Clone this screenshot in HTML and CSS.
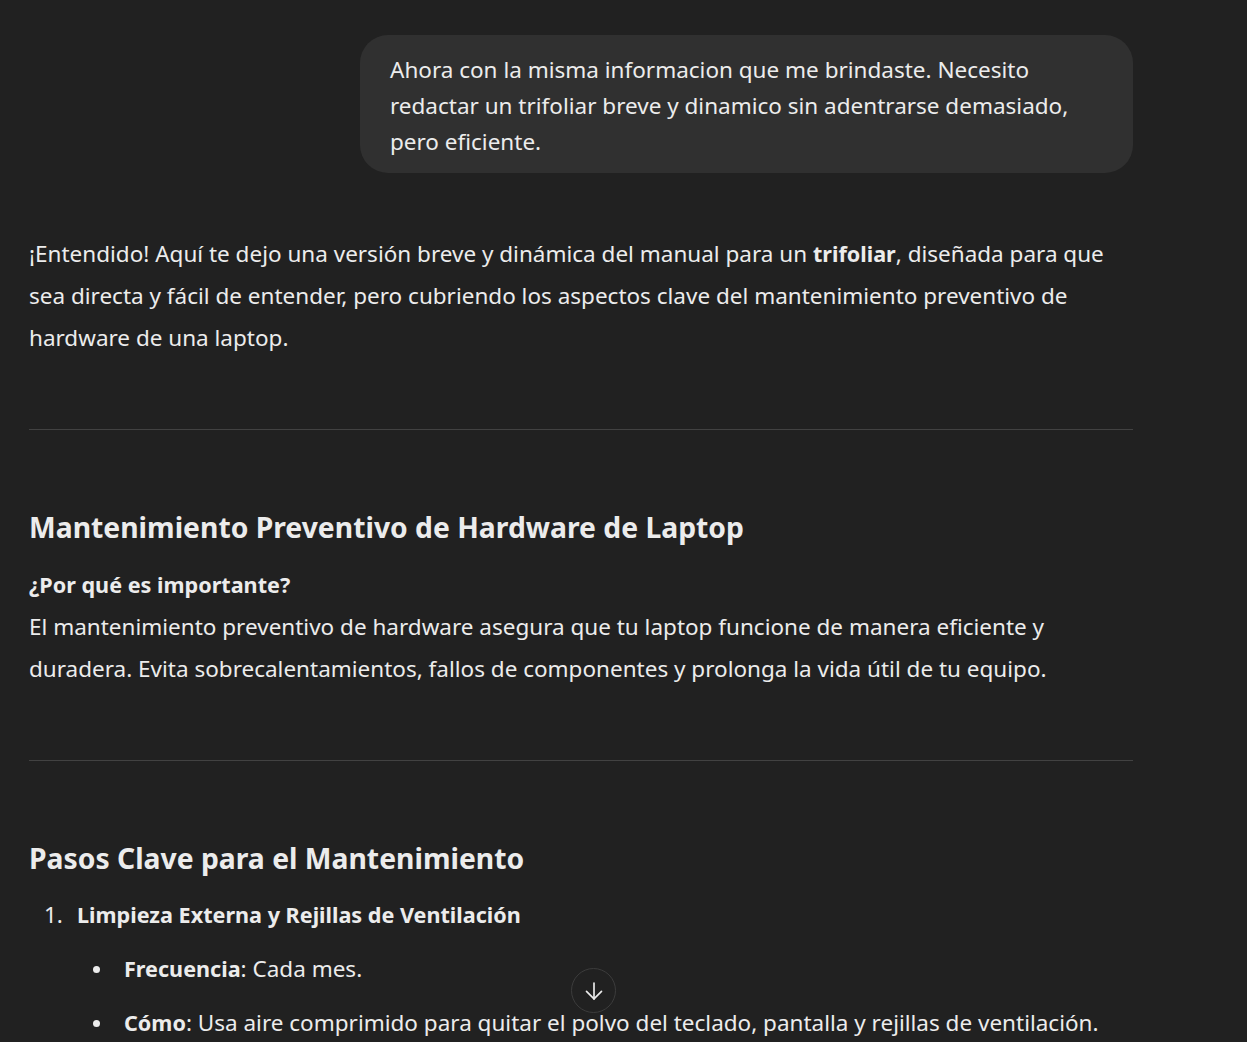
FILE: index.html
```html
<!DOCTYPE html>
<html lang="es">
<head>
<meta charset="utf-8">
<link rel="stylesheet" href="styles.css">
</head>
<body>
<main class="thread">
  <div class="user-row">
    <div class="bubble">Ahora con la misma informacion que me brindaste. Necesito redactar un trifoliar breve y dinamico sin adentrarse demasiado, pero eficiente.</div>
  </div>
  <article class="answer">
    <p class="intro">¡Entendido! Aquí te dejo una versión breve y dinámica del manual para un <strong>trifoliar</strong>, diseñada para que sea directa y fácil de entender, pero cubriendo los aspectos clave del mantenimiento preventivo de hardware de una laptop.</p>
    <hr>
    <h3>Mantenimiento Preventivo de Hardware de Laptop</h3>
    <p class="sub"><strong class="lead">¿Por qué es importante?</strong>El mantenimiento preventivo de hardware asegura que tu laptop funcione de manera eficiente y duradera. Evita sobrecalentamientos, fallos de componentes y prolonga la vida útil de tu equipo.</p>
    <hr>
    <h3>Pasos Clave para el Mantenimiento</h3>
    <ol class="steps">
      <li class="step">
        <span class="num">1.</span>
        <div class="step-body">
          <strong>Limpieza Externa y Rejillas de Ventilación</strong>
          <ul class="bullets">
            <li><span><strong>Frecuencia</strong>: Cada mes.</span></li>
            <li><span><strong>Cómo</strong>: Usa aire comprimido para quitar el polvo del teclado, pantalla y rejillas de ventilación.</span></li>
          </ul>
        </div>
      </li>
    </ol>
  </article>
</main>
<button class="scroll-btn" aria-label="Desplazar abajo">
  <svg width="24" height="24" viewBox="0 0 24 24" fill="none" stroke="#ececec" stroke-width="2" stroke-linecap="round" stroke-linejoin="round"><path d="M12 2.5v19"/><path d="M3 12.5l9 9 9-9"/></svg>
</button>
</body>
</html>
```
FILE: styles.css
```css
html, body {
  margin: 0;
  padding: 0;
  background: #212121;
  color: #ececec;
  font-family: "Noto Sans", "Open Sans", sans-serif;
  overflow: hidden;
  height: 1042px;
}
.thread {
  width: 1104px;
  padding: 35px 0 0 29px;
}
.user-row {
  display: flex;
  justify-content: flex-end;
}
.bubble {
  background: #303030;
  border-radius: 28px;
  width: 713px;
  padding: 17px 30px 13px 30px;
  font-size: 22.5px;
  line-height: 36px;
}
.answer {
  margin-top: 60px;
  font-size: 22.5px;
  line-height: 42px;
}
.answer p { margin: 0; }
.answer strong {
  font-weight: 700;
  font-size: 21.6px;
}
.lead {
  display: block;
  line-height: 43px;
}
hr {
  border: 0;
  border-top: 1px solid #424242;
  margin: 70px 0;
}
h3 {
  font-size: 28.3px;
  line-height: 40px;
  font-weight: 700;
  padding-top: 7px;
  margin: 0 0 16px 0;
}
.steps {
  list-style: none;
  margin: 0;
  padding: 0 0 0 15px;
}
.step {
  display: flex;
}
.num {
  width: 33px;
  flex: none;
}
.step-body {
  flex: 1;
}
.bullets {
  list-style: none;
  margin: 12px 0 0 0;
  padding: 0;
}
.bullets li {
  display: flex;
  align-items: center;
  margin-bottom: 12px;
}
.bullets li::before {
  content: "";
  flex: none;
  width: 7px;
  height: 7px;
  border-radius: 50%;
  background: #ececec;
  margin: 0 24px 0 16px;
}
.scroll-btn {
  position: absolute;
  left: 571px;
  top: 968px;
  width: 45px;
  height: 45px;
  border-radius: 50%;
  border: 1px solid #3c3c3c;
  background: #212121;
  display: flex;
  align-items: center;
  justify-content: center;
  padding: 0;
}
.scroll-btn svg {
  width: 20px;
  height: 20px;
}
```
